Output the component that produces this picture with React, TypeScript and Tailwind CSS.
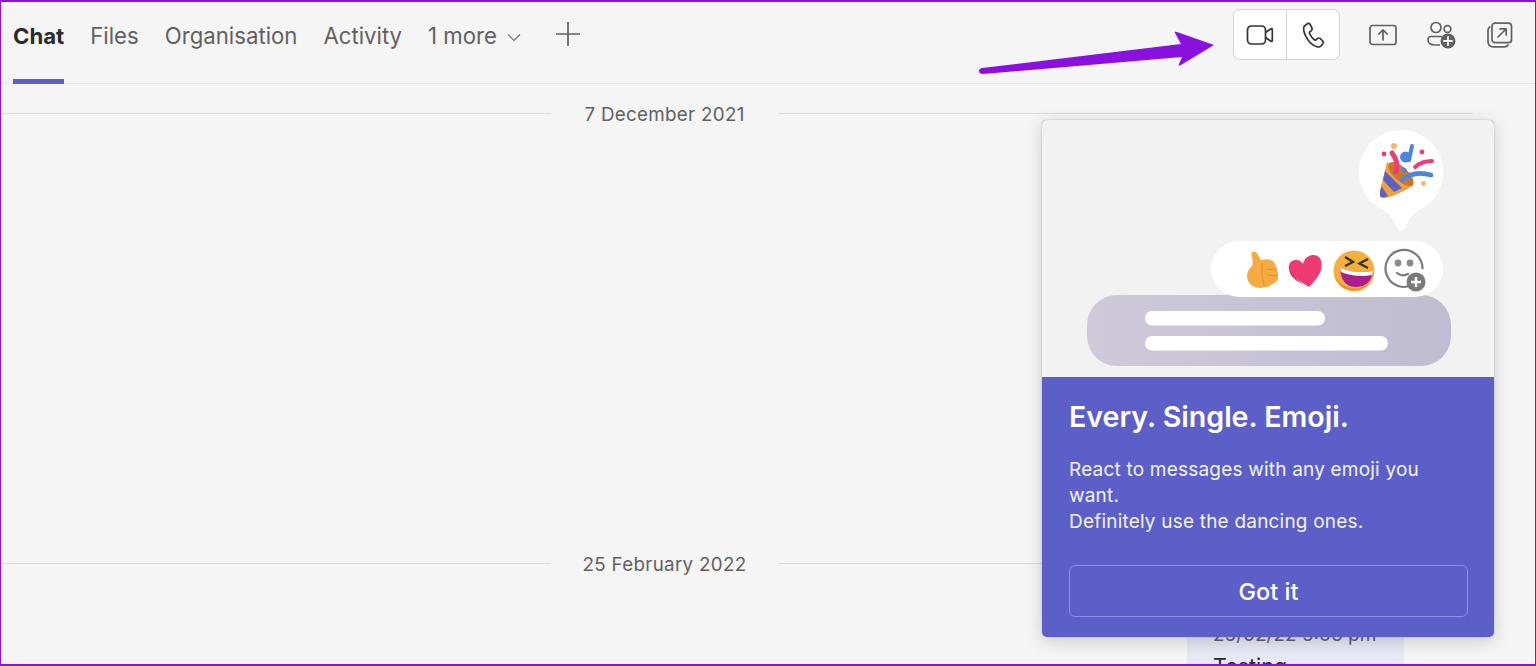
import React from "react";

function VideoIcon() {
  return (
    <svg width="28" height="22" viewBox="0 0 28 22" fill="none" stroke="#333" strokeWidth="1.7" strokeLinejoin="round">
      <rect x="1.5" y="2" width="18" height="18" rx="4" />
      <path d="M19.5 8.5 L25 4.8 Q26.3 4.2 26.3 5.6 V16.4 Q26.3 17.8 25 17.2 L19.5 13.5" />
    </svg>
  );
}

function PhoneIcon() {
  return (
    <svg width="24" height="28" viewBox="0 0 24 28" fill="none" stroke="#333" strokeWidth="1.7" strokeLinejoin="round">
      <path d="M3 5.5 L6.5 2.6 Q8 1.8 9 3.2 L11 7.2 Q11.5 8.6 10.4 9.6 L8.6 11 Q8.2 11.6 8.8 13 Q10.8 17.4 13.6 19 Q14.4 19.4 15 18.8 L16.6 17.4 Q17.8 16.6 19 17.4 L21.8 20 Q22.8 21.2 22 22.4 L20 25 Q18.6 26.4 16 25.8 Q9.5 24 5 15.6 Q1.6 9 3 5.5 Z" />
    </svg>
  );
}

function ShareIcon() {
  return (
    <svg width="28" height="22" viewBox="0 0 28 22" fill="none" stroke="#616161" strokeWidth="1.7" strokeLinecap="round" strokeLinejoin="round">
      <rect x="1" y="1.5" width="26" height="19" rx="2.5" />
      <path d="M14 16 V6 M9.8 10 L14 5.8 L18.2 10" />
    </svg>
  );
}

function PeopleAddIcon() {
  return (
    <svg width="30" height="28" viewBox="0 0 30 28" fill="none">
      <circle cx="9" cy="6.5" r="5" stroke="#616161" strokeWidth="1.7" />
      <circle cx="20.5" cy="8" r="3.4" stroke="#616161" strokeWidth="1.7" />
      <path d="M15 15.5 H4 Q1 15.5 1 18.5 Q1 24 8 24 H13" stroke="#616161" strokeWidth="1.7" />
      <circle cx="21" cy="20" r="7.5" fill="#616161" />
      <path d="M21 16 V24 M17 20 H25" stroke="#fff" strokeWidth="1.8" strokeLinecap="round" />
    </svg>
  );
}

function PopoutIcon() {
  return (
    <svg width="26" height="26" viewBox="0 0 26 26" fill="none" stroke="#616161" strokeWidth="1.7" strokeLinecap="round" strokeLinejoin="round">
      <rect x="5" y="1.2" width="19.5" height="19.5" rx="3" />
      <path d="M11 15 L19 7 M13 6.8 H19.2 V13" />
      <path d="M2.8 5 Q1 6 1 8.4 V19.5 Q1 24.8 6.3 24.8 H17.5 Q20 24.8 21 23" />
    </svg>
  );
}

function Illustration() {
  return (
    <svg width="452" height="257" viewBox="1042 120 452 257" className="block">
      <defs>
        <linearGradient id="pill" x1="0" y1="0" x2="1" y2="0">
          <stop offset="0" stopColor="#cecada" />
          <stop offset="1" stopColor="#c0bcd1" />
        </linearGradient>
      </defs>
      <rect x="1087" y="295" width="364" height="71" rx="30" fill="url(#pill)" />
      <rect x="1145" y="311" width="180" height="14.5" rx="7.2" fill="#fff" />
      <rect x="1145" y="336" width="243" height="14.5" rx="7.2" fill="#fff" />
      <rect x="1211" y="241" width="232" height="56" rx="28" fill="#fff" />

      <path d="M1401 130 A42 42 0 0 1 1419 210 Q1411 214 1406 226 Q1401 235 1396 226 Q1391 214 1383 210 A42 42 0 0 1 1401 130 Z" fill="#fff" />
      {/* party popper */}
      <path d="M1387 162 L1414 185 Q1398 195 1386 198 Q1379 199 1380 191 Z" fill="#f0a13c" />
      <path d="M1385 171 L1402 188 L1394 192 L1383 180 Z" fill="#5a62c9" />
      <path d="M1381.5 186 L1388 196 L1383 197.5 Q1379 198 1380 192 Z" fill="#5a62c9" />
      <ellipse cx="1401" cy="174" rx="7" ry="16" transform="rotate(-47 1401 174)" fill="#c9772a" />
      <path d="M1392 153 Q1399 162 1396 172" stroke="#ee3a76" strokeWidth="5" fill="none" strokeLinecap="round" />
      <path d="M1402 180 Q1414 170 1431 175" stroke="#4a86dc" strokeWidth="4.6" fill="none" strokeLinecap="round" />
      <path d="M1415 167 Q1422 161 1432 161" stroke="#ee3a76" strokeWidth="4" fill="none" strokeLinecap="round" />
      <path d="M1412 146 L1409 160" stroke="#4a86dc" strokeWidth="4" fill="none" strokeLinecap="round" />
      <circle cx="1405.5" cy="157" r="5.5" fill="#4a86dc" />
      <circle cx="1394" cy="146" r="3" fill="#f5b860" />
      <circle cx="1384" cy="154" r="2.4" fill="#ee3a76" />
      <circle cx="1422" cy="152" r="2.4" fill="#ee3a76" />
      <circle cx="1423.5" cy="183.5" r="2.4" fill="#f5b860" />
      <circle cx="1404" cy="170" r="2.5" fill="#4a86dc" />

      {/* thumb */}
      <path d="M1251 253 Q1254 250 1257 253 L1261 260 Q1270 258 1274 262 Q1279 270 1278 280 Q1270 288 1260 288 Q1248 287 1247 277 Q1247 270 1252 266 Q1254 262 1251 253 Z" fill="#f6ab42" />
      <path d="M1262 263 Q1261 275 1264 286 M1267 269 L1276 270 M1267 275 L1277 276" stroke="#e28f2f" strokeWidth="1" fill="none" />
      {/* heart */}
      <path d="M1312 255 C1319 254 1323 260 1321.5 268 C1320 276 1313 283 1309 287 C1303 283 1293 278 1290 272 C1286.5 265 1291 259 1297 260 C1300 260.5 1302 262 1303 264 C1304 259 1307 256 1312 255 Z" fill="#ee3a72" />
      <path d="M1289 268 C1291 276 1300 282 1306 286 C1300 283 1293 279 1290 273 Z" fill="#b3206f" />
      {/* laugh */}
      <circle cx="1354" cy="271" r="20.5" fill="#f6ae3d" />
      <path d="M1335 276 A20 20 0 0 0 1372 279 A21 21 0 0 1 1335 276 Z" fill="#e9803a" />
      <path d="M1340 268 Q1356 274 1373 271 Q1371 287 1355 287 Q1341 286 1340 268 Z" fill="#a91d8c" />
      <path d="M1340 268 Q1356 274 1373 271 L1372 275 Q1356 278 1341 272 Z" fill="#fff" />
      <path d="M1345 257 L1353 262 L1345 266 M1368 259 L1359.5 263.5 L1368 268" stroke="#333" strokeWidth="2.4" fill="none" />
      {/* smiley */}
      <path d="M1414 284 A18.5 18.5 0 1 1 1422.5 269" stroke="#7a7a7a" strokeWidth="2.2" fill="none" />
      <circle cx="1398" cy="263" r="3.4" fill="#8a8a8a" />
      <circle cx="1410" cy="263" r="3.4" fill="#8a8a8a" />
      <path d="M1397 273 Q1402 277 1408 274" stroke="#7a7a7a" strokeWidth="2.2" fill="none" strokeLinecap="round" />
      <circle cx="1416" cy="282" r="9.5" fill="#7a7a7a" />
      <path d="M1416 277 V287 M1411 282 H1421" stroke="#fff" strokeWidth="2.4" />
    </svg>
  );
}

function Tab({ children, active }: { children: React.ReactNode; active?: boolean }) {
  return (
    <div
      className={
        "flex items-center h-[82px] pb-[10px] border-b-[5px] text-[22.2px] " +
        (active ? "border-[#5b5fc7] font-bold text-[#2b2b2b]" : "border-transparent text-[#616161]")
      }
    >
      {children}
    </div>
  );
}

function DateRow({ label }: { label: string }) {
  return (
    <div className="flex items-center h-[24px] text-[18.8px] tracking-[0.3px] text-[#616161]">
      <div className="h-[1px] w-[550px] bg-[#dcdcdc]" />
      <div className="w-[227px] text-center pt-[4px]">{label}</div>
      <div className="h-[1px] w-[695px] bg-[#dcdcdc]" />
    </div>
  );
}

export default function App() {
  return (
    <div className="relative box-border w-[1536px] h-[666px] overflow-hidden bg-[#f5f5f5] border-x border-y-2 border-[#8a10e4] font-['Inter',sans-serif]">
      <header className="flex items-start justify-between h-[82px] border-b border-[#e6e6e6] pl-[12px] pr-[22px]">
        <nav className="flex items-start gap-[26px]">
          <Tab active>Chat</Tab>
          <Tab>Files</Tab>
          <Tab>Organisation</Tab>
          <Tab>Activity</Tab>
          <div className="flex items-center gap-[10px] h-[82px] pb-[15px] text-[22.2px] text-[#616161]">
            1 more
            <svg width="14" height="9" viewBox="0 0 14 9" fill="none" stroke="#707070" strokeWidth="1.2" className="mt-[3px]">
              <path d="M1 1.5 L7 7.5 L13 1.5" />
            </svg>
          </div>
          <svg width="24" height="24" viewBox="0 0 24 24" fill="none" stroke="#616161" strokeWidth="1.7" className="mt-[20px] ml-[9px]">
            <path d="M12 0 V24 M0 12 H24" />
          </svg>
        </nav>
        <div className="flex items-center gap-[30px] mt-[7px]">
          <div className="flex h-[51px] w-[107px] rounded-[7px] border border-[#d4d4d4] bg-white overflow-hidden mr-[-1px]">
            <div className="flex-1 flex items-center justify-center border-r border-[#d4d4d4]">
              <VideoIcon />
            </div>
            <div className="flex-1 flex items-center justify-center">
              <PhoneIcon />
            </div>
          </div>
          <ShareIcon />
          <PeopleAddIcon />
          <PopoutIcon />
        </div>
      </header>

      <main className="flex flex-col">
        <div className="mt-[17px]">
          <DateRow label="7 December 2021" />
        </div>
        <div className="mt-[426px]">
          <DateRow label="25 February 2022" />
        </div>
        <div className="mt-[9px] ml-[1186px] w-[217px] h-[120px] bg-[#e8e8f6] pl-[26px] pt-[39px] text-[#616161] text-[19px]">
          <div className="leading-[24px]">25/02/22 5:06 pm</div>
          <div className="mt-[5px] leading-[28px] text-[21.5px] text-[#2b2b2b]">Testing</div>
        </div>
      </main>

      {/* arrow annotation */}
      <svg width="250" height="60" viewBox="970 20 250 60" className="absolute left-[969px] top-[18px]">
        <path
          d="M982 68 L1181 44 L1175 33 Q1174 31 1177 32 L1214 45 L1181 65 Q1178 67 1179 64 L1182 57 L983 74 Q979 74 979 71 Q979 68.5 982 68 Z"
          fill="#8a10e0"
        />
      </svg>

      {/* coach mark */}
      <section className="absolute left-[1041px] top-[118px] w-[452px] h-[517px] rounded-[5px] overflow-hidden bg-[#5b5fc7] shadow-[0_0_0_1px_rgba(0,0,0,0.05),0_4px_18px_rgba(0,0,0,0.18)] text-white">
        <div className="h-[257px] bg-[#f2f2f2]">
          <Illustration />
        </div>
        <div className="px-[27px] pt-[23px]">
          <h2 className="text-[28.6px] leading-[34px] font-semibold">Every. Single. Emoji.</h2>
          <p className="mt-[23px] text-[19px] leading-[26px] tracking-[0.2px] text-[#f3f3fb]">
            React to messages with any emoji you
            <br />
            want.
            <br />
            Definitely use the dancing ones.
          </p>
          <button className="mt-[30px] w-[399px] h-[52px] pt-[2px] rounded-[6px] border-[1.5px] border-[#8f92e0] text-[23.5px] font-medium">
            Got it
          </button>
        </div>
      </section>
    </div>
  );
}
